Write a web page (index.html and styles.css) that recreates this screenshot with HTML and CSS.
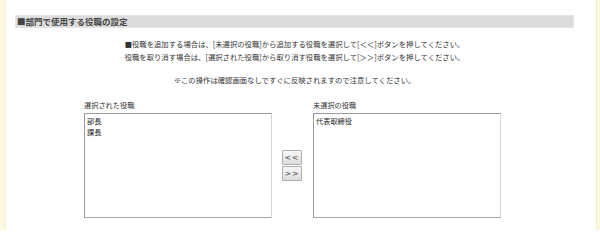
FILE: index.html
```html
<!DOCTYPE html>
<html lang="ja">
<head>
<meta charset="utf-8">
<link rel="stylesheet" href="styles.css">
</head>
<body>
<div class="page">
  <div class="side side-left"></div>
  <main class="content">
    <h2 class="section-title">■部門で使用する役職の設定</h2>
    <div class="notes">
      <p>■役職を追加する場合は、[未選択の役職]から追加する役職を選択して[＜＜]ボタンを押してください。<br>役職を取り消す場合は、[選択された役職]から取り消す役職を選択して[＞＞]ボタンを押してください。</p>
      <p class="warn">※この操作は確認画面なしですぐに反映されますので注意してください。</p>
    </div>
    <div class="lists">
      <div class="col">
        <div class="label">選択された役職</div>
        <div class="listbox">
          <div class="item">部長</div>
          <div class="item">課長</div>
        </div>
      </div>
      <div class="btns">
        <button class="btn" type="button">&lt;&lt;</button>
        <button class="btn" type="button">&gt;&gt;</button>
      </div>
      <div class="col">
        <div class="label">未選択の役職</div>
        <div class="listbox">
          <div class="item">代表取締役</div>
        </div>
      </div>
    </div>
  </main>
  <div class="side side-right"></div>
</div>
</body>
</html>
```
FILE: styles.css
```css
html, body {
  margin: 0;
  padding: 0;
  background: #ffffff;
}
body {
  font-family: "Noto Sans CJK JP", "Noto Sans", sans-serif;
  color: #333333;
}
.page {
  display: flex;
  height: 230px;
  width: 600px;
  overflow: hidden;
}
.side {
  background: #fdf8e2;
  flex: none;
}
.side-left {
  width: 5px;
  border-right: 1px solid #f6efcf;
}
.side-right {
  width: 3px;
  border-left: 1px solid #f3e9c2;
}
.content {
  flex: none;
  width: 559px;
  margin-left: 9px;
  margin-right: 22px;
}
.section-title {
  margin: 15px 0 0 0;
  height: 13px;
  box-sizing: border-box;
  background: #dcdcdc;
  border: 1px solid #e6e6e6;
  font-size: 8.5px;
  font-weight: bold;
  line-height: 11px;
  color: #444444;
  padding-left: 1px;
}
.notes {
  text-align: center;
  font-size: 7.35px;
  line-height: 13px;
  color: #333333;
  margin-top: 9px;
}
.notes p {
  margin: 0;
}
.notes .warn {
  margin-top: 10px;
}
.lists {
  display: flex;
  align-items: center;
  padding-left: 69px;
  margin-top: 14px;
}
.col {
  width: 188px;
}
.label {
  font-size: 7.2px;
  line-height: 10px;
  height: 10px;
  margin-bottom: 3px;
  color: #333333;
}
.listbox {
  box-sizing: border-box;
  height: 105px;
  border: 1px solid #a8a8a8;
  border-top-color: #9a9a9a;
  border-left-color: #9a9a9a;
  border-right-color: #d4d4d4;
  background: #ffffff;
  padding: 2px 2px;
}
.item {
  font-size: 7.2px;
  line-height: 11px;
  color: #222222;
}
.btns {
  display: flex;
  flex-direction: column;
  gap: 1px;
  margin: 13px 11px 0 10px;
}
.btn {
  width: 20px;
  height: 15px;
  box-sizing: border-box;
  padding: 0;
  border: 1px solid #adadad;
  border-radius: 1px;
  background: linear-gradient(#f6f6f6, #dddddd);
  font-family: "DejaVu Sans", sans-serif;
  font-size: 7.5px;
  letter-spacing: 1px;
  line-height: 13px;
  color: #444444;
  text-align: center;
}
```
